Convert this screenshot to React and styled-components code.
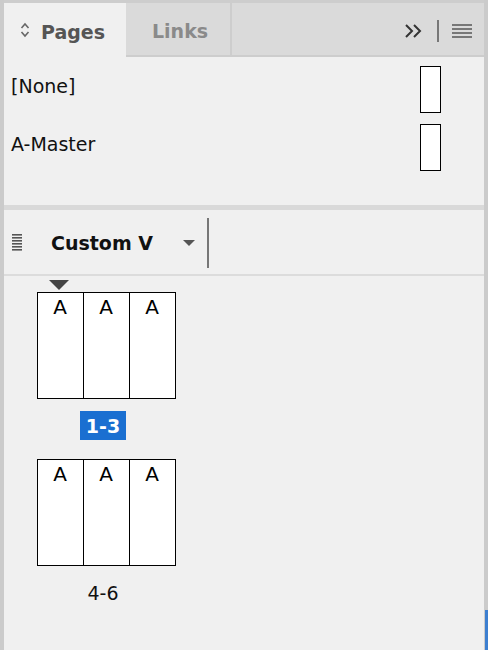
import React from 'react';
import styled, {createGlobalStyle} from 'styled-components';

const Global = createGlobalStyle`
  body{
    margin:0;
    background:#f0f0f0;
    font-family:"DejaVu Sans", "Liberation Sans", sans-serif;
  }
`

const masters = ['[None]', 'A-Master'];
const spreads = [
  {label:'1-3', selected:true, current:true},
  {label:'4-6', selected:false, current:false},
];

const SortIcon = () => (
  <svg width="10" height="16" viewBox="0 0 10 16">
    <path d="M1.5 6 L5 2 L8.5 6 M1.5 10 L5 14 L8.5 10" fill="none" stroke="#666" strokeWidth="1.6"/>
  </svg>
)

const MoreIcon = () => (
  <svg width="20" height="16" viewBox="0 0 20 16">
    <path d="M2 2 L8 8 L2 14 M10 2 L16 8 L10 14" fill="none" stroke="#333" strokeWidth="2"/>
  </svg>
)

const MenuIcon = () => (
  <svg width="20" height="14" viewBox="0 0 20 14">
    {[0,4,8,12].map(y => <rect key={y} x="0" y={y} width="20" height="2" fill="#777"/>)}
  </svg>
)

const StackIcon = () => (
  <svg width="10" height="18" viewBox="0 0 10 18">
    {[0,3,6,9,12,15].map(y => <rect key={y} x="0" y={y} width="10" height="1.6" fill="#555"/>)}
  </svg>
)

const App = () => {
  return (
    <Frame>
      <Global/>
      <Edge/>
      <Main>
        <TabBar>
          <Tab $active>
            <SortIcon/>
            <span>Pages</span>
          </Tab>
          <Tab>
            <span>Links</span>
          </Tab>
          <TabFill>
            <MoreIcon/>
            <Sep $h={22}/>
            <MenuIcon/>
          </TabFill>
        </TabBar>

        <Masters>
          {masters.map(m => (
            <MasterRow key={m}>
              <MasterName>{m}</MasterName>
              <MasterBox/>
            </MasterRow>
          ))}
        </Masters>

        <Divider/>

        <Toolbar>
          <StackIcon/>
          <ViewName>Custom V</ViewName>
          <Caret/>
          <Sep $h={50}/>
        </Toolbar>

        <PagesArea>
          {spreads.map(s => (
            <SpreadGroup key={s.label}>
              <Marker $show={s.current}/>
              <Spread>
                {[0,1,2].map(i => <Page key={i}>A</Page>)}
              </Spread>
              <SpreadLabel $selected={s.selected}>{s.label}</SpreadLabel>
            </SpreadGroup>
          ))}
        </PagesArea>
      </Main>
      <RightEdge>
        <div className='track'/>
        <div className='thumb'/>
      </RightEdge>
    </Frame>
  )
}

const Frame = styled.div`
  display:flex;
  width:488px;
  height:650px;
  overflow:hidden;
  background:#f0f0f0;
`

const Edge = styled.div`
  width:4px;
  background:#cbcbcb;
  flex-shrink:0;
`

const RightEdge = styled.div`
  width:4px;
  display:flex;
  flex-direction:column;
  background:#cbcbcb;
  .track{ flex:1; }
  .thumb{
    height:40px;
    background:#3d7fd0;
    margin-left:1px;
  }
`

const Main = styled.div`
  flex:1;
  display:flex;
  flex-direction:column;
  border-top:3px solid #cdcdcd;
`

const TabBar = styled.div`
  display:flex;
  height:54px;
  background:#dadada;
`

const Tab = styled.div`
  display:flex;
  align-items:center;
  gap:11px;
  box-sizing:border-box;
  width:${p => p.$active ? '124px' : '106px'};
  padding-left:${p => p.$active ? '16px' : '26px'};
  background:${p => p.$active ? '#f0f0f0' : '#dadada'};
  border-right:2px solid #cdcdcd;
  border-bottom:${p => p.$active ? 'none' : '2px solid #cdcdcd'};
  font-size:19px;
  font-weight:bold;
  color:${p => p.$active ? '#555' : '#8a8a8a'};
  margin-left:${p => p.$active ? '0' : '-2px'};
  span{ padding-top:3px; }
`

const TabFill = styled.div`
  flex:1;
  display:flex;
  align-items:center;
  justify-content:flex-end;
  gap:13px;
  padding-right:12px;
  border-bottom:2px solid #cdcdcd;
  padding-top:4px;
`

const Sep = styled.div`
  width:2px;
  height:${p => p.$h}px;
  background:#777;
`

const Masters = styled.div`
  height:148px;
  padding:9px 43px 0 7px;
  box-sizing:border-box;
  display:flex;
  flex-direction:column;
  gap:11px;
`

const MasterRow = styled.div`
  display:flex;
  justify-content:space-between;
  align-items:flex-start;
`

const MasterName = styled.div`
  font-size:19px;
  line-height:20px;
  margin-top:10px;
  color:#111;
`

const MasterBox = styled.div`
  width:19px;
  height:45px;
  border:1px solid #000;
  background:#fff;
`

const Divider = styled.div`
  height:5px;
  background:#d9d9d9;
`

const Toolbar = styled.div`
  height:62px;
  display:flex;
  align-items:center;
  padding-left:8px;
  border-bottom:2px solid #dcdcdc;
  padding-top:2px;
`

const ViewName = styled.div`
  font-size:19px;
  font-weight:bold;
  color:#111;
  margin-left:29px;
  width:132px;
`

const Caret = styled.div`
  width:0;
  height:0;
  border-left:6px solid transparent;
  border-right:6px solid transparent;
  border-top:6px solid #555;
  margin-right:12px;
`

const PagesArea = styled.div`
  display:flex;
  flex-direction:column;
  padding:4px 0 0 32px;
`

const SpreadGroup = styled.div`
  width:140px;
  display:flex;
  flex-direction:column;
  align-items:center;
  margin-bottom:7px;
`

const Marker = styled.div`
  align-self:flex-start;
  margin-left:13px;
  width:0;
  height:0;
  border-left:10px solid transparent;
  border-right:10px solid transparent;
  border-top:10px solid ${p => p.$show ? '#444' : 'transparent'};
  margin-bottom:2px;
`

const Spread = styled.div`
  display:flex;
  border:1px solid #000;
  background:#fff;
  height:105px;
`

const Page = styled.div`
  width:45px;
  text-align:center;
  font-size:20px;
  line-height:24px;
  padding-top:2px;
  color:#000;
  & + &{ border-left:1px solid #000; }
`

const SpreadLabel = styled.div`
  margin-top:12px;
  margin-right:6px;
  padding:0 6px;
  height:29px;
  line-height:30px;
  font-size:19px;
  font-weight:${p => p.$selected ? 'bold' : 'normal'};
  color:${p => p.$selected ? '#fff' : '#111'};
  background:${p => p.$selected ? '#1a6fd1' : 'transparent'};
`

export default App
